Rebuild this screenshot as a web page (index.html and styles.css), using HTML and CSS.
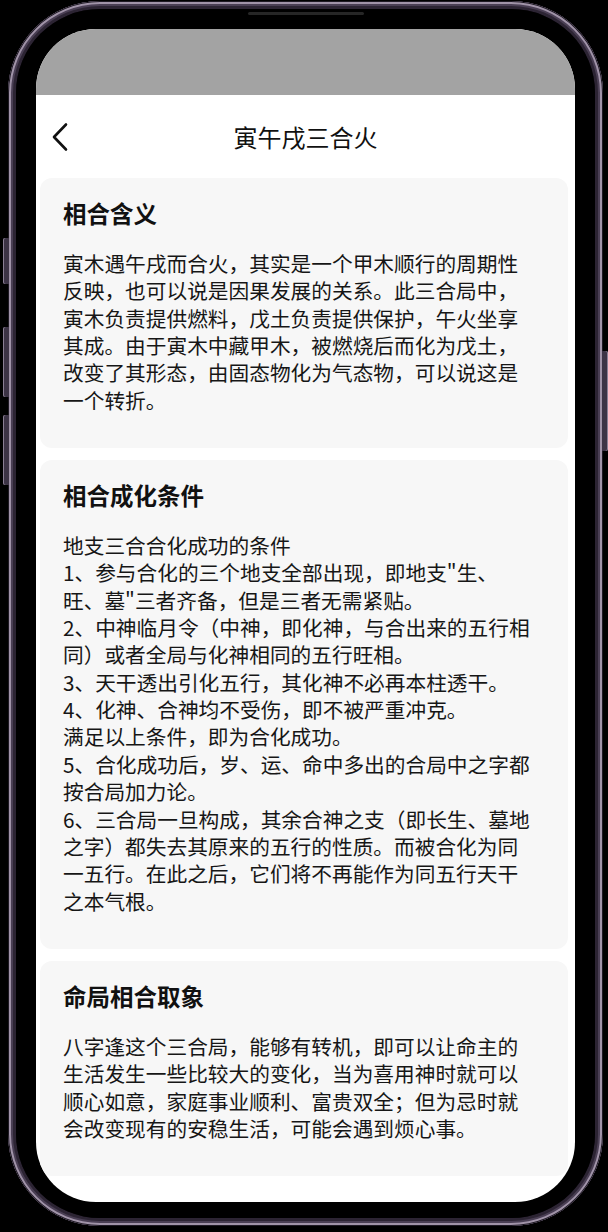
FILE: index.html
```html
<!DOCTYPE html>
<html lang="zh-CN">
<head>
  <meta charset="UTF-8">
  <meta name="viewport" content="width=device-width, initial-scale=1.0">
  <title>寅午戌三合火</title>
  <link rel="stylesheet" href="styles.css">
</head>
<body>
  <div class="phone">
    <span class="side-btn btn-action"></span>
    <span class="side-btn btn-vol-up"></span>
    <span class="side-btn btn-vol-down"></span>
    <span class="side-btn btn-power"></span>
    <div class="bezel">
      <span class="speaker"></span>
      <div class="screen">
        <div class="status"></div>

        <div class="topbar">
          <button class="back" aria-label="返回">
            <svg width="18" height="30" viewBox="0 0 18 30">
              <polyline points="15,2.5 3,15 15,27.5" fill="none" stroke="#111" stroke-width="2.6" stroke-linecap="round" stroke-linejoin="round"/>
            </svg>
          </button>
          <h1>寅午戌三合火</h1>
          <span></span>
        </div>

        <div class="content">
          <section class="card">
            <h2>相合含义</h2>
            <p>寅木遇午戌而合火，其实是一个甲木顺行的周期性<br>反映，也可以说是因果发展的关系。此三合局中，<br>寅木负责提供燃料，戊土负责提供保护，午火坐享<br>其成。由于寅木中藏甲木，被燃烧后而化为戊土，<br>改变了其形态，由固态物化为气态物，可以说这是<br>一个转折。</p>
          </section>

          <section class="card">
            <h2>相合成化条件</h2>
            <p>地支三合合化成功的条件<br>1、参与合化的三个地支全部出现，即地支"生、<br>旺、墓"三者齐备，但是三者无需紧贴。<br>2、中神临月令（中神，即化神，与合出来的五行相<br>同）或者全局与化神相同的五行旺相。<br>3、天干透出引化五行，其化神不必再本柱透干。<br>4、化神、合神均不受伤，即不被严重冲克。<br>满足以上条件，即为合化成功。<br>5、合化成功后，岁、运、命中多出的合局中之字都<br>按合局加力论。<br>6、三合局一旦构成，其余合神之支（即长生、墓地<br>之字）都失去其原来的五行的性质。而被合化为同<br>一五行。在此之后，它们将不再能作为同五行天干<br>之本气根。</p>
          </section>

          <section class="card">
            <h2>命局相合取象</h2>
            <p>八字逢这个三合局，能够有转机，即可以让命主的<br>生活发生一些比较大的变化，当为喜用神时就可以<br>顺心如意，家庭事业顺利、富贵双全；但为忌时就<br>会改变现有的安稳生活，可能会遇到烦心事。</p>
          </section>
        </div>
      </div>
    </div>
  </div>
</body>
</html>
```

FILE: styles.css
```css
*{box-sizing:border-box;}
body{margin:0;background:#000;font-family:"Noto Sans CJK SC", "Noto Sans", sans-serif;color:#161616;}

/* device frame */
.phone{position:relative;width:595px;height:1225px;margin:1px 0 0 8px;padding:8px;border-radius:92px;background:#3a3042;box-shadow:inset 0 0 0 1px #1e1923, inset 0 0 0 3px #a093a8, inset 0 0 0 5px #4a3f54, inset 0 0 0 8px #2c2433, inset 0 0 0 9px #141017;}
.bezel{position:relative;height:100%;padding:20px 20px 16px;border-radius:84px;background:#000;}
.speaker{position:absolute;top:3px;left:50%;width:116px;height:3px;margin-left:-58px;border-radius:2px;background:#262626;}
.side-btn{position:absolute;width:6px;border-radius:2px 0 0 2px;background:#3d3446;box-shadow:inset 1px 0 0 #8c8096;}
.btn-action{left:-5px;top:237px;height:46px;}
.btn-vol-up{left:-5px;top:326px;height:70px;}
.btn-vol-down{left:-5px;top:414px;height:70px;}
.btn-power{right:-5px;top:350px;height:100px;border-radius:0 2px 2px 0;box-shadow:inset -1px 0 0 #8c8096;}

.screen{display:flex;flex-direction:column;height:100%;overflow:hidden;border-radius:60px;background:#fff;}
.status{flex:none;height:66px;background:#a3a3a3;}

/* header */
.topbar{flex:none;display:grid;grid-template-columns:1fr auto 1fr;align-items:center;height:83px;}
.back{justify-self:start;display:flex;margin:0 0 0 15px;padding:0;border:0;background:none;cursor:pointer;}
.topbar h1{margin:0;font-size:24px;font-weight:400;line-height:32px;color:#111;}

/* cards */
.content{display:flex;flex-direction:column;gap:12px;padding:0 7px 0 4px;}
.card{padding:20px 20px 34px 23px;border-radius:12px;background:#f7f7f7;}
.card h2{margin:0;font-size:23.5px;font-weight:700;line-height:30px;color:#111;}
.card p{margin:22px 0 0;font-size:20.7px;line-height:27.35px;white-space:nowrap;}
```
